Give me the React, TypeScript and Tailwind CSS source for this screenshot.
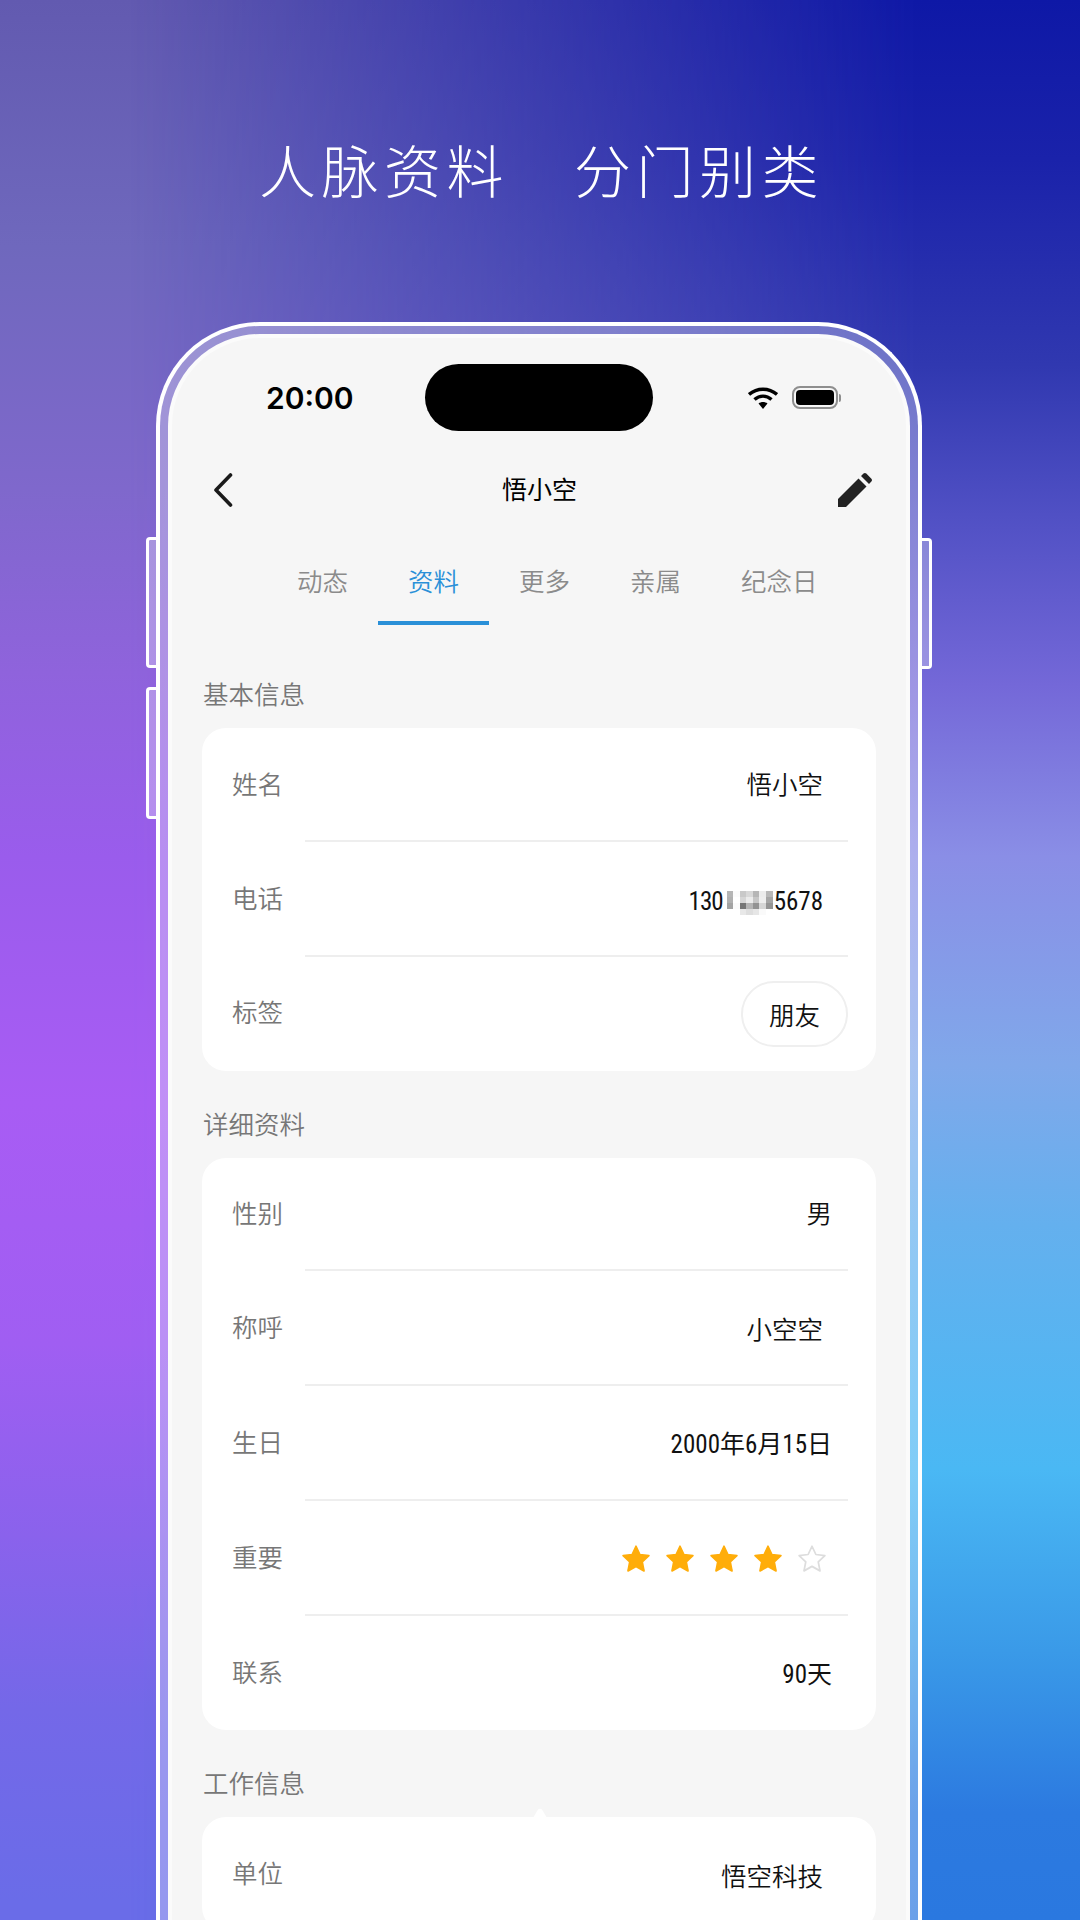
const CJK = "font-['Noto_Sans_CJK_SC','Noto_Sans',sans-serif]";

const cells = [
  '#b5b5b5', '#fbfbfb', '#c9c9c9', '#d8d8d8', '#b6b6b6', '#ececec', '#b8b8b8',
  '#b0b0b0', '#ffffff', '#d6d6d6', '#ebebeb', '#c6c6c6', '#eeeeee', '#a6a6a6',
  '#a3a3a3', '#fbfbfb', '#767676', '#b5b5b5', '#939393', '#d6d6d6', '#959595',
  '#ffffff', '#ffffff', '#e8e8e8', '#dedede', '#e6e6e6', '#fafafa', '#ffffff',
];

const Star = ({ filled }: { filled: boolean }) => (
  <svg viewBox="0 0 24 24" className="w-[30px] h-[30px]">
    <path
      d="M12 1.8l3.1 6.6 7.2.9-5.3 5 1.4 7.2-6.4-3.6-6.4 3.6 1.4-7.2-5.3-5 7.2-.9z"
      fill={filled ? '#ffad0a' : '#ffffff'}
      stroke={filled ? '#ffad0a' : '#dddddd'}
      strokeWidth="1.4"
      strokeLinejoin="round"
    />
  </svg>
);

type RowProps = { label: string; children: React.ReactNode; first?: boolean; last?: boolean; pr?: string };

const Row = ({ label, children, first, last, pr = 'pr-[53px]' }: RowProps) => (
  <div className={`relative flex items-center justify-between pl-[30px] pb-[5px] ${first ? 'h-[113.5px]' : last ? 'h-[114px]' : 'h-[115px]'}`}>
    <span className="text-[25.5px] leading-none text-[#777777]">{label}</span>
    <div className={`flex items-center ${pr}`}>{children}</div>
    {!last && <div className="absolute bottom-0 left-[103px] right-[28px] h-[2px] bg-[#eeeeee]" />}
  </div>
);

const Section = ({ title, children, mt, notch }: { title: string; children: React.ReactNode; mt: string; notch?: boolean }) => (
  <section className={mt}>
    <h3 className="pl-[31px] text-[25.5px] leading-[34px] font-[350] text-[#777777]">{title}</h3>
    <div className="relative mt-[18px] mx-[30px] rounded-[24px] bg-white">
      {notch && (
        <svg viewBox="0 0 14 10" className="absolute left-[331px] top-[-9px] w-[14px] h-[10px]">
          <path d="M0 10L5 1.5Q7 0 9 1.5L14 10z" fill="#ffffff" />
        </svg>
      )}
      {children}
    </div>
  </section>
);

const val = 'text-[25.5px] leading-none font-[350] text-[#111111]';
const num = "text-[25px] leading-none font-normal font-['Roboto','Noto_Sans_CJK_SC',sans-serif] [font-stretch:75%] text-[#111111]";

export default function App() {
  return (
    <div className={`relative w-[1080px] h-[1920px] overflow-hidden font-[350] bg-[linear-gradient(to_bottom,#625ab0_0%,#6f68bd_12.8%,#7f68cc_25.5%,#8f63dc_35%,#9a5cec_44.6%,#a85cf4_57.4%,#a05ef2_70%,#8a62ec_80%,#7468e8_89%,#6a6ce8_99%)] ${CJK}`}>
      <div className="absolute inset-0 bg-[linear-gradient(to_bottom,#0e18a6_0%,#1a22aa_8.3%,#3038b0_19%,#5050c4_26.8%,#7468d8_35.7%,#8a8ee6_44.6%,#80a8ea_55.5%,#64b0ee_63.8%,#4ab8f4_76.5%,#3a9ae8_86%,#2c7ae0_94.4%,#2a78e0_100%)] [mask-image:linear-gradient(to_right,transparent_12%,black_85%)]" />

      <div className="relative flex flex-col items-center">
        <h1 className="mt-[133px] ml-[3px] h-[70px] text-[57px] leading-[70px] font-light tracking-[5.5px] text-white whitespace-pre">
          人脉资料{'　'}<span className="ml-[2.5px]">分门别类</span>
        </h1>

        <div className="relative mt-[119px] ml-[-2px] w-[766px] h-[1600px] rounded-t-[104px] border-[4px] border-b-0 border-white bg-white/30 px-[8px] pt-[8px]">
          <div className="absolute left-[-14px] top-[211px] w-[10px] h-[131px] rounded-l-[4px] border-[3px] border-r-0 border-white bg-white/30" />
          <div className="absolute left-[-14px] top-[361px] w-[10px] h-[132px] rounded-l-[4px] border-[3px] border-r-0 border-white bg-white/30" />
          <div className="absolute right-[-14px] top-[212px] w-[10px] h-[131px] rounded-r-[4px] border-[3px] border-l-0 border-white bg-white/30" />

          <div className="h-full rounded-t-[92px] border-[4px] border-b-0 border-[#fbfbfb] bg-[#f6f6f6]">
            {/* status bar */}
            <div className="relative flex items-center justify-between h-[93px] pt-[26px] pl-[94px] pr-[65px]">
              <span className="font-['Inter',sans-serif] text-[30px] leading-none font-semibold text-black">20:00</span>
              <div className="absolute left-[253px] top-[26px] w-[228px] h-[67px] rounded-[34px] bg-black" />
              <div className="flex items-center gap-[14px]">
                <svg viewBox="0 0 30 22" className="w-[30px] h-[22px]">
                  <path d="M1 7.5C9 .5 21 .5 29 7.5" fill="none" stroke="#000" strokeWidth="3.4" />
                  <path d="M6.5 12.5C11.5 8 18.5 8 23.5 12.5" fill="none" stroke="#000" strokeWidth="3.4" />
                  <path d="M10.5 16.4c2.6-2 6.4-2 9 0L15 22z" fill="#000" />
                </svg>
                <div className="flex items-center">
                  <div className="w-[46px] h-[23px] rounded-[8px] border-[2px] border-[#8e8e8e] p-[2px]">
                    <div className="w-full h-full rounded-[4px] bg-black" />
                  </div>
                  <div className="ml-[1px] w-[2px] h-[8px] rounded-r-[2px] bg-[#8e8e8e]" />
                </div>
              </div>
            </div>

            {/* nav */}
            <div className="flex items-center justify-between h-[76px] mt-[21px] pl-[41px] pr-[34px]">
              <svg viewBox="0 0 20 34" className="w-[20px] h-[34px]">
                <path d="M17.5 2L3 17l14.5 15" fill="none" stroke="#1a1a1a" strokeWidth="3.6" strokeLinecap="round" strokeLinejoin="round" />
              </svg>
              <span className="ml-[8px] pb-[4px] text-[25px] leading-none font-normal text-black">悟小空</span>
              <svg viewBox="0 0 34 34" className="w-[34px] h-[34px]">
                <path d="M0 34V26L20.5 5.5 28.5 13.5 8 34z M23 3 25.5.6c.8-.8 2-.8 2.8 0l5.1 5.1c.8.8.8 2 0 2.8L31 11z" fill="#222222" />
              </svg>
            </div>

            {/* tabs */}
            <div className="flex h-[81px] mt-[16px] pl-[95px] text-[25.5px] text-[#8b8b8b]">
              {['动态', '资料', '更多', '亲属', '纪念日'].map((t, i) => (
                <div key={t} className={`relative px-[30px] pt-[19px] leading-[34px] whitespace-nowrap ${i === 1 ? 'text-[#2a90d8]' : ''}`}>
                  {t}
                  {i === 1 && <div className="absolute bottom-0 left-0 right-0 h-[4px] bg-[#2a90d8]" />}
                </div>
              ))}
            </div>

            <Section title="基本信息" mt="mt-[51px]">
              <Row label="姓名" first><span className={val}>悟小空</span></Row>
              <Row label="电话">
                <span className={`${num} pt-[10px] tracking-[-1px]`}>130</span>
                <div className="grid grid-cols-7 grid-rows-4 w-[46px] h-[24px] mt-[12px] ml-[4px] mr-[1px]">
                  {cells.map((c, i) => (
                    <div key={i} style={{ backgroundColor: c }} />
                  ))}
                </div>
                <span className={`${num} pt-[10px]`}>5678</span>
              </Row>
              <Row label="标签" last pr="pr-[28px]">
                <div className="flex items-center justify-center mt-[5px] w-[107px] h-[66px] rounded-full border-[2px] border-[#efefef]">
                  <span className={val}>朋友</span>
                </div>
              </Row>
            </Section>

            <Section title="详细资料" mt="mt-[35px]">
              <Row label="性别" first pr="pr-[44px]"><span className={val}>男</span></Row>
              <Row label="称呼"><span className={`${val} pt-[3px]`}>小空空</span></Row>
              <Row label="生日" pr="pr-[44px]"><span className={`${num} pt-[7px]`}>2000年6月15日</span></Row>
              <Row label="重要" pr="pr-[49px]">
                <div className="flex gap-[14px] mt-[5px]">
                  {[1, 2, 3, 4, 5].map((n) => <Star key={n} filled={n < 5} />)}
                </div>
              </Row>
              <Row label="联系" last pr="pr-[44px]"><span className={`${num} pt-[7px]`}>90天</span></Row>
            </Section>

            <Section title="工作信息" mt="mt-[35px]" notch>
              <Row label="单位" first><span className={`${val} pt-[6px]`}>悟空科技</span></Row>
            </Section>
          </div>
        </div>
      </div>
    </div>
  );
}
